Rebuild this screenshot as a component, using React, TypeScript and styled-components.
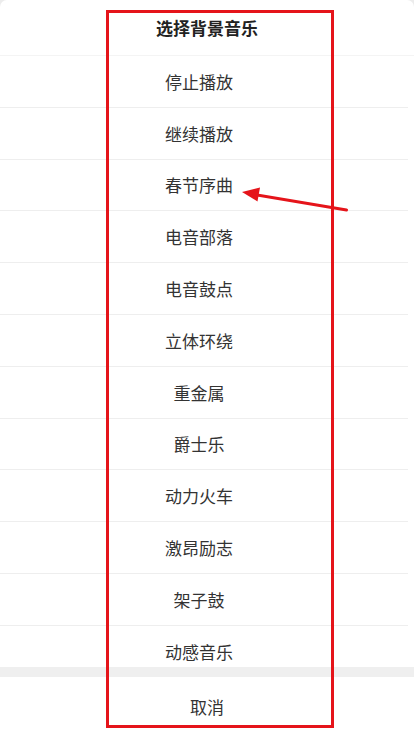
import React from "react";
import styled, { createGlobalStyle } from "styled-components";

const GlobalStyle = createGlobalStyle`
  html, body {
    margin: 0;
    padding: 0;
    background: #ececec;
  }
  * {
    box-sizing: border-box;
  }
`;

const Screen = styled.div`
  position: relative;
  width: 414px;
  height: 736px;
  overflow: hidden;
  font-family: "Noto Sans CJK SC", "Noto Sans", sans-serif;
`;

const Sheet = styled.div`
  display: flex;
  flex-direction: column;
  height: 100%;
  background: #fff;
  border-radius: 7px 7px 0 0;
`;

const Title = styled.div`
  flex: none;
  height: 56px;
  display: flex;
  align-items: center;
  justify-content: center;
  padding-bottom: 1px;
  font-size: 17px;
  font-weight: 700;
  color: #222;
  border-bottom: 1px solid #f4f4f4;
`;

const List = styled.div`
  flex: none;
  height: 611px;
  overflow: hidden;
`;

const Row = styled.div`
  height: 51.8px;
  margin-right: 6px;
  padding-right: 10px;
  display: flex;
  align-items: center;
  justify-content: center;
  font-size: 17px;
  color: #333;
  border-bottom: 1px solid #eeeeee;
`;

const Gap = styled.div`
  flex: none;
  height: 10px;
  background: #efefef;
`;

const Cancel = styled.div`
  flex: 1;
  display: flex;
  align-items: center;
  justify-content: center;
  font-size: 17px;
  color: #333;
`;

const Frame = styled.div`
  position: absolute;
  left: 106px;
  top: 10px;
  width: 228px;
  height: 718px;
  border: 3px solid #e5141a;
  pointer-events: none;
`;

const Arrow = styled.svg`
  position: absolute;
  left: 0;
  top: 0;
  pointer-events: none;
`;

const songs = [
  "停止播放",
  "继续播放",
  "春节序曲",
  "电音部落",
  "电音鼓点",
  "立体环绕",
  "重金属",
  "爵士乐",
  "动力火车",
  "激昂励志",
  "架子鼓",
  "动感音乐",
];

export default function App() {
  return (
    <Screen>
      <GlobalStyle />
      <Sheet>
        <Title>选择背景音乐</Title>
        <List>
          {songs.map((name) => (
            <Row key={name}>{name}</Row>
          ))}
        </List>
        <Gap />
        <Cancel>取消</Cancel>
      </Sheet>
      <Frame />
      <Arrow width="414" height="736" viewBox="0 0 414 736">
        <line x1="254" y1="194.5" x2="346.5" y2="210" stroke="#e5141a" strokeWidth="3" strokeLinecap="round" />
        <polygon points="242,192 260,187.5 257.5,201.5" fill="#e5141a" />
      </Arrow>
    </Screen>
  );
}
